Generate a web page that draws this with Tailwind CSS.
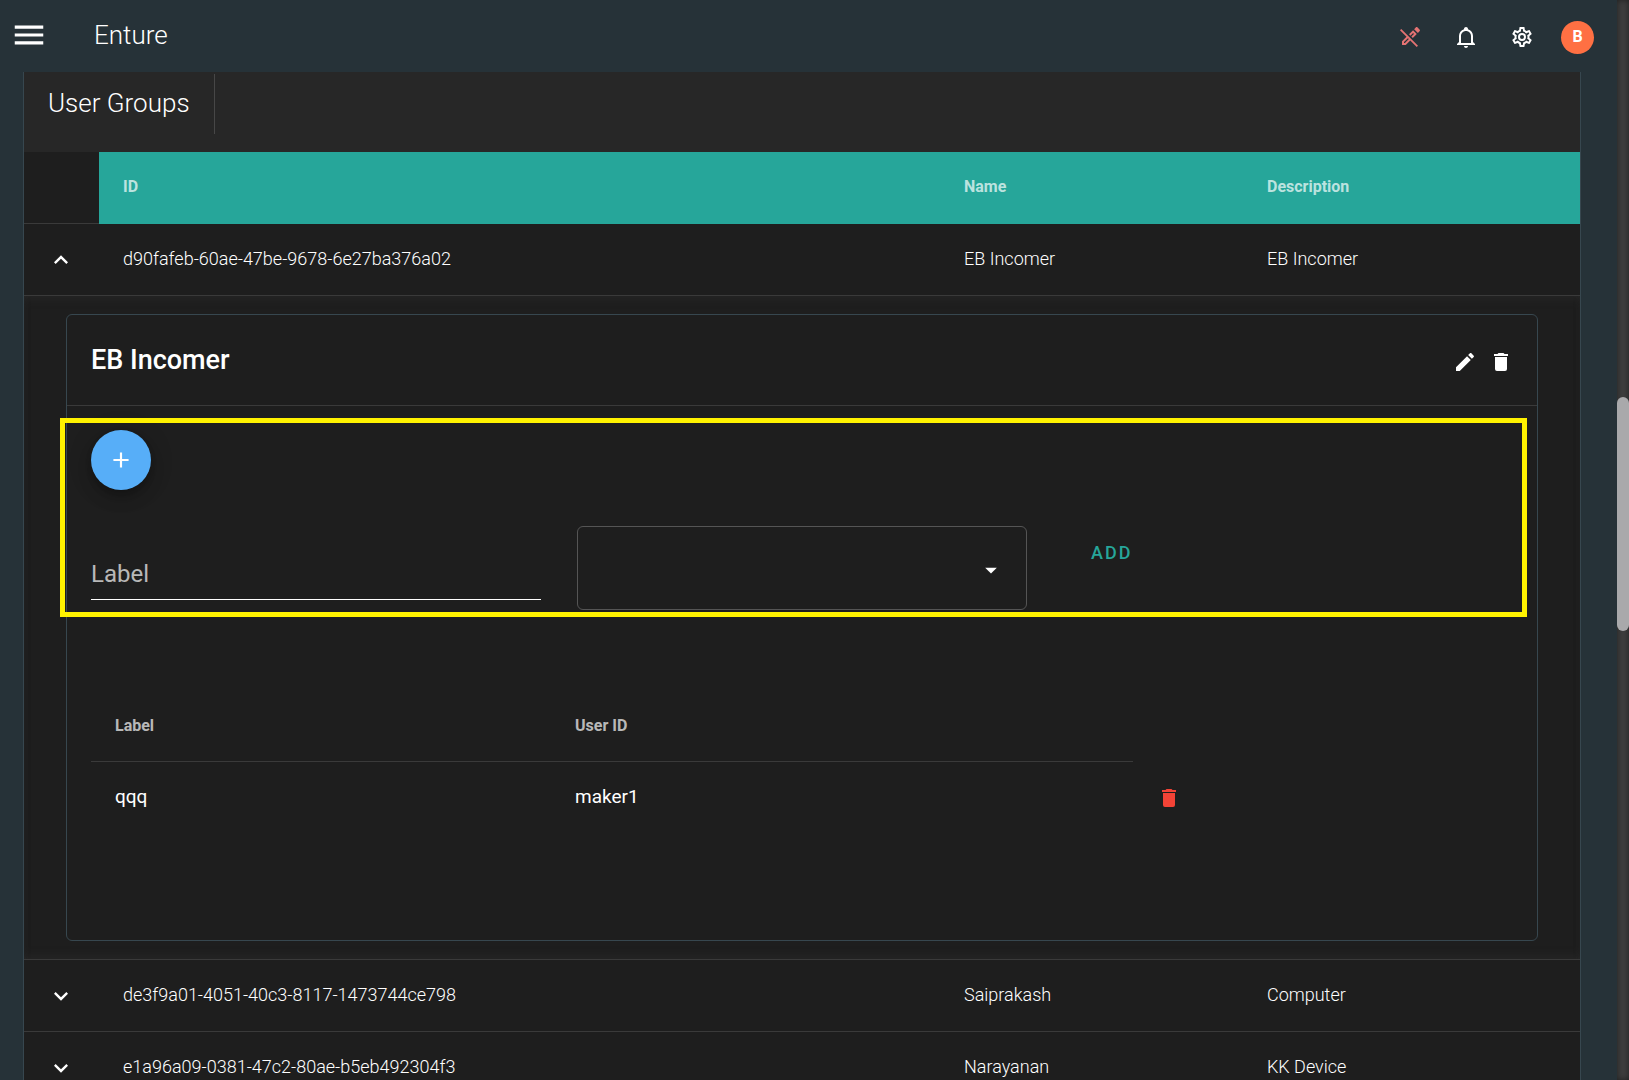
<!DOCTYPE html>
<html lang="en">

<head>
  <meta charset="UTF-8">
  <meta name="viewport" content="width=device-width, initial-scale=1.0">
  <title>Enture - User Groups</title>
  <script src="https://cdn.jsdelivr.net/npm/@tailwindcss/browser@4"></script>
</head>

<body class="flex h-screen overflow-hidden bg-[#263238] font-['Roboto','Liberation_Sans',sans-serif] text-white">

  <div class="flex min-w-0 flex-1 flex-col">

    <!-- Top bar -->
    <header class="flex h-[72px] shrink-0 items-center pb-[2px] pl-[10px] pr-[23px]">
      <button type="button" aria-label="Menu">
        <svg class="size-[38px]" viewBox="0 0 24 24" fill="currentColor"><path d="M3,6H21V8H3V6M3,11H21V13H3V11M3,16H21V18H3V16Z"/></svg>
      </button>
      <h1 class="ml-[46px] text-[26px] leading-9 font-light">Enture</h1>
      <div class="ml-auto flex items-center gap-8 pt-1">
        <button type="button" aria-label="Editing off" class="text-[#e57373]">
          <svg class="size-6" viewBox="0 0 24 24" fill="currentColor" fill-rule="evenodd"><path d="M18.66,2C18.4,2 18.16,2.09 17.97,2.28L16.13,4.13L19.88,7.88L21.72,6.03C22.11,5.64 22.11,5 21.72,4.63L19.38,2.28C19.18,2.09 18.91,2 18.66,2M3.28,4L2,5.28L8.5,11.75L4,16.25V20H7.75L12.25,15.5L18.72,22L20,20.72L3.28,4M15.06,5.19L11.03,9.22L12.46,10.65L15.06,8.05L15.95,8.94L13.35,11.54L14.78,12.97L18.81,8.94L15.06,5.19M9.92,13.17L10.83,14.08L6.92,18H6V17.08L9.92,13.17Z"/></svg>
        </button>
        <button type="button" aria-label="Notifications">
          <svg class="size-6" viewBox="0 0 24 24" fill="currentColor"><path d="M10 21H14C14 22.1 13.1 23 12 23S10 22.1 10 21M21 19V20H3V19L5 17V11C5 7.9 7 5.2 10 4.3V4C10 2.9 10.9 2 12 2S14 2.9 14 4V4.3C17 5.2 19 7.9 19 11V17L21 19M17 11C17 8.2 14.8 6 12 6S7 8.2 7 11V18H17V11Z"/></svg>
        </button>
        <button type="button" aria-label="Settings">
          <svg class="size-6" viewBox="0 0 24 24" fill="currentColor"><path d="M12,8A4,4 0 0,1 16,12A4,4 0 0,1 12,16A4,4 0 0,1 8,12A4,4 0 0,1 12,8M12,10A2,2 0 0,0 10,12A2,2 0 0,0 12,14A2,2 0 0,0 14,12A2,2 0 0,0 12,10M10,22C9.75,22 9.54,21.82 9.5,21.58L9.13,18.93C8.5,18.68 7.96,18.34 7.44,17.94L4.95,18.95C4.73,19.03 4.46,18.95 4.34,18.73L2.34,15.27C2.21,15.05 2.27,14.78 2.46,14.63L4.57,12.97L4.5,12L4.57,11L2.46,9.37C2.27,9.22 2.21,8.95 2.34,8.73L4.34,5.27C4.46,5.05 4.73,4.96 4.95,5.05L7.44,6.05C7.96,5.66 8.5,5.32 9.13,5.07L9.5,2.42C9.54,2.18 9.75,2 10,2H14C14.25,2 14.46,2.18 14.5,2.42L14.87,5.07C15.5,5.32 16.04,5.66 16.56,6.05L19.05,5.05C19.27,4.96 19.54,5.05 19.66,5.27L21.66,8.73C21.79,8.95 21.73,9.22 21.54,9.37L19.43,11L19.5,12L19.43,13L21.54,14.63C21.73,14.78 21.79,15.05 21.66,15.27L19.66,18.73C19.54,18.95 19.27,19.04 19.05,18.95L16.56,17.95C16.04,18.34 15.5,18.68 14.87,18.93L14.5,21.58C14.46,21.82 14.25,22 14,22H10M11.25,4L10.88,6.61C9.68,6.86 8.62,7.5 7.85,8.39L5.44,7.35L4.69,8.65L6.8,10.2C6.4,11.37 6.4,12.64 6.8,13.8L4.68,15.36L5.43,16.66L7.86,15.62C8.63,16.5 9.68,17.14 10.87,17.38L11.24,20H12.76L13.13,17.39C14.32,17.14 15.37,16.5 16.14,15.62L18.57,16.66L19.32,15.36L17.2,13.81C17.6,12.64 17.6,11.37 17.2,10.2L19.31,8.65L18.56,7.35L16.15,8.39C15.38,7.5 14.32,6.86 13.12,6.62L12.75,4H11.25Z"/></svg>
        </button>
        <button type="button" aria-label="Account" class="-ml-[5px] size-[33px] rounded-full bg-[#ff7043] text-base font-bold">B</button>
      </div>
    </header>

    <main class="min-h-0 flex-1 overflow-hidden pl-[23px] pr-9">
      <section class="border-x border-[#37474f] bg-[#1e1e1e]">

        <div class="flex h-20 items-start bg-[#272727]">
          <h2 class="mt-[2px] flex h-[60px] items-center border-r border-[#474747] px-6 pb-[2px] text-[26px] leading-9 font-light">User Groups</h2>
        </div>

        <!-- Groups table -->
        <table class="w-full table-fixed border-separate border-spacing-0 text-left text-lg font-light">
          <colgroup>
            <col class="w-[75px]">
            <col>
            <col class="w-[303px]">
            <col class="w-[337px]">
          </colgroup>
          <thead>
            <tr class="h-[72px] text-base font-bold text-white/70">
              <td class="border-b border-[#3a3a3a]"></td>
              <th class="bg-[#26a69a] px-6 pb-[2px]">ID</th>
              <th class="bg-[#26a69a] px-6 pb-[2px]">Name</th>
              <th class="bg-[#26a69a] px-6 pb-[2px]">Description</th>
            </tr>
          </thead>
          <tbody>
            <tr class="h-[72px]">
              <td class="border-b border-[#3a3a3a] pr-[2px]">
                <button type="button" aria-label="Collapse" class="mx-auto block">
                  <svg class="size-7" viewBox="0 0 24 24" fill="currentColor"><path d="M7.41,15.41L12,10.83L16.59,15.41L18,14L12,8L6,14L7.41,15.41Z"/></svg>
                </button>
              </td>
              <td class="border-b border-[#3a3a3a] px-6 pb-[2px]">d90fafeb-60ae-47be-9678-6e27ba376a02</td>
              <td class="border-b border-[#3a3a3a] px-6 pb-[2px]">EB Incomer</td>
              <td class="border-b border-[#3a3a3a] px-6 pb-[2px]">EB Incomer</td>
            </tr>

            <!-- Expanded group -->
            <tr>
              <td colspan="4" class="border-b border-[#3a3a3a] px-[42px] py-[18px] font-normal shadow-[inset_0_6px_12px_-7px_rgba(50,50,50,0.75),inset_0_-6px_12px_-7px_rgba(50,50,50,0.75)]">
                <div class="rounded-md border border-[#37474f]">
                  <div class="flex h-[91px] items-center border-b border-[#3a3a3a] px-6">
                    <h3 class="text-[27px] leading-9 font-medium">EB Incomer</h3>
                    <div class="ml-auto flex gap-3 pt-1">
                      <button type="button" aria-label="Edit group">
                        <svg class="size-6" viewBox="0 0 24 24" fill="currentColor"><path d="M20.71,7.04C21.1,6.65 21.1,6 20.71,5.63L18.37,3.29C18,2.9 17.35,2.9 16.96,3.29L15.12,5.12L18.87,8.87M3,17.25V21H6.75L17.81,9.93L14.06,6.18L3,17.25Z"/></svg>
                      </button>
                      <button type="button" aria-label="Delete group">
                        <svg class="size-6" viewBox="0 0 24 24" fill="currentColor"><path d="M19,4H15.5L14.5,3H9.5L8.5,4H5V6H19M6,19A2,2 0 0,0 8,21H16A2,2 0 0,0 18,19V7H6V19Z"/></svg>
                      </button>
                    </div>
                  </div>

                  <div class="relative px-6 pt-6 pb-[106px]">
                    <!-- Highlight around the add form -->
                    <div class="pointer-events-none absolute top-3 right-[10px] -left-[7px] h-[199px] border-5 border-[#fff200]"></div>

                    <button type="button" aria-label="Add user" class="flex size-[60px] items-center justify-center rounded-full bg-[#57aef8] shadow-[0_5px_8px_-2px_rgba(0,0,0,0.2),0_9px_15px_rgba(0,0,0,0.14),0_2px_27px_rgba(0,0,0,0.12)]">
                      <svg class="size-[26px]" viewBox="0 0 24 24" fill="currentColor"><path d="M19,13H13V19H11V13H5V11H11V5H13V11H19V13Z"/></svg>
                    </button>

                    <form class="mt-9 grid grid-cols-3 items-start gap-9">
                      <div class="relative mt-6">
                        <input id="label" type="text" class="h-[50px] w-full border-b border-white bg-transparent text-2xl outline-none">
                        <label for="label" class="pointer-events-none absolute top-2 left-0 text-2xl text-white/70">Label</label>
                      </div>
                      <div class="relative">
                        <select aria-label="User" class="block h-[84px] w-full appearance-none rounded-md border border-[#555555] bg-transparent px-[18px] text-2xl outline-none">
                          <option></option>
                          <option>maker1</option>
                        </select>
                        <svg class="pointer-events-none absolute top-[30px] right-[22px] size-7" viewBox="0 0 24 24" fill="currentColor"><path d="M7,10L12,15L17,10H7Z"/></svg>
                      </div>
                      <button type="button" class="h-[54px] justify-self-start px-7 text-lg font-medium tracking-[2px] text-[#26a69a]">ADD</button>
                    </form>

                    <!-- Users of the group -->
                    <table class="mt-20 w-full max-w-[1114px] table-fixed border-separate border-spacing-0 text-left text-[19px]">
                      <colgroup>
                        <col class="w-[460px]">
                        <col>
                        <col class="w-[72px]">
                      </colgroup>
                      <thead>
                        <tr class="h-[72px] text-base font-bold text-white/70">
                          <th class="border-b border-[#3a3a3a] px-6">Label</th>
                          <th class="border-b border-[#3a3a3a] px-6">User ID</th>
                          <td></td>
                        </tr>
                      </thead>
                      <tbody>
                        <tr class="h-[72px]">
                          <td class="px-6 pb-[2px]">qqq</td>
                          <td class="px-6 pb-[2px]">maker1</td>
                          <td>
                            <button type="button" aria-label="Delete user" class="mx-auto block text-[#f44336]">
                              <svg class="size-6" viewBox="0 0 24 24" fill="currentColor"><path d="M19,4H15.5L14.5,3H9.5L8.5,4H5V6H19M6,19A2,2 0 0,0 8,21H16A2,2 0 0,0 18,19V7H6V19Z"/></svg>
                            </button>
                          </td>
                        </tr>
                      </tbody>
                    </table>
                  </div>
                </div>
              </td>
            </tr>

            <tr class="h-[72px]">
              <td class="border-b border-[#3a3a3a] pr-[2px]">
                <button type="button" aria-label="Expand" class="mx-auto block">
                  <svg class="size-7" viewBox="0 0 24 24" fill="currentColor"><path d="M7.41,8.58L12,13.17L16.59,8.58L18,10L12,16L6,10L7.41,8.58Z"/></svg>
                </button>
              </td>
              <td class="border-b border-[#3a3a3a] px-6 pb-[2px]">de3f9a01-4051-40c3-8117-1473744ce798</td>
              <td class="border-b border-[#3a3a3a] px-6 pb-[2px]">Saiprakash</td>
              <td class="border-b border-[#3a3a3a] px-6 pb-[2px]">Computer</td>
            </tr>
            <tr class="h-[72px]">
              <td class="border-b border-[#3a3a3a] pr-[2px]">
                <button type="button" aria-label="Expand" class="mx-auto block">
                  <svg class="size-7" viewBox="0 0 24 24" fill="currentColor"><path d="M7.41,8.58L12,13.17L16.59,8.58L18,10L12,16L6,10L7.41,8.58Z"/></svg>
                </button>
              </td>
              <td class="border-b border-[#3a3a3a] px-6 pb-[2px]">e1a96a09-0381-47c2-80ae-b5eb492304f3</td>
              <td class="border-b border-[#3a3a3a] px-6 pb-[2px]">Narayanan</td>
              <td class="border-b border-[#3a3a3a] px-6 pb-[2px]">KK Device</td>
            </tr>
          </tbody>
        </table>
      </section>
    </main>
  </div>

  <!-- Scrollbar -->
  <div class="relative w-3 shrink-0 bg-[#3e3e3e] shadow-[inset_0_0_6px_rgba(0,0,0,0.5)]">
    <div class="absolute inset-x-0 top-[397px] h-[234px] rounded-full bg-[#a9a9ab]"></div>
  </div>

</body>

</html>
